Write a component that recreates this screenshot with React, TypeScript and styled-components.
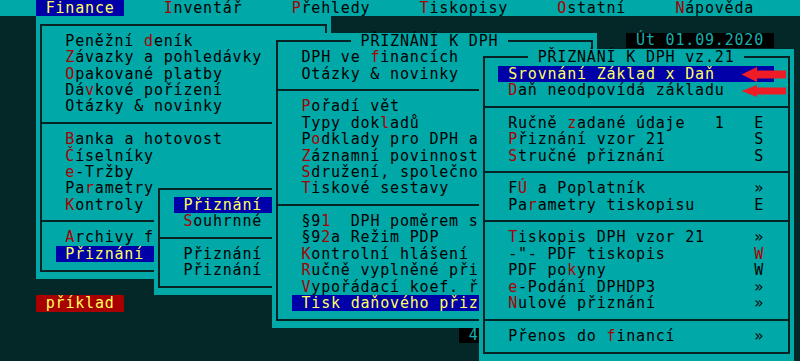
import React from 'react';
import styled, { createGlobalStyle } from 'styled-components';

// text-mode grid: one cell is CW x RH pixels
const CW = 9.84;
const RH = 16.4;
const X0 = -3.5;

const TEAL = '#00a8a8';
const DARK = '#042828';
const BLUE = '#0000a8';
const YELLOW = '#ffff5e';
const RED = '#a80000';
const INK = '#000000';
const LINE = '#062222';

const colX = (c: number) => X0 + c * CW;

const GlobalStyle = createGlobalStyle`
  html, body {
    margin: 0;
    padding: 0;
    background: ${DARK};
  }
  body {
    font-family: "DejaVu Sans Mono", "Liberation Mono", monospace;
    font-size: 15px;
    letter-spacing: 0.81px;
  }
`;

const Screen = styled.div`
  position: relative;
  width: 800px;
  height: 361px;
  overflow: hidden;
  background: ${DARK};
  color: ${INK};
  line-height: ${RH}px;
  white-space: pre;
`;

const MenuBar = styled.div`
  display: flex;
  gap: ${3 * CW}px;
  height: ${RH}px;
  padding-left: ${colX(4)}px;
  background: ${TEAL};
`;

const MenuItem = styled.div<{ $active?: boolean }>`
  padding: 0 ${CW}px;
  background: ${p => (p.$active ? BLUE : 'transparent')};
  color: ${p => (p.$active ? YELLOW : INK)};
`;

const Hot = styled.span`
  color: ${RED};
`;

// a window on the text desktop, placed by cell
const Win = styled.div<{ $c: number; $r: number; $w: number; $h: number; $z: number }>`
  position: absolute;
  left: ${p => colX(p.$c)}px;
  top: ${p => p.$r * RH}px;
  width: ${p => p.$w * CW}px;
  height: ${p => p.$h * RH}px;
  z-index: ${p => p.$z};
  box-sizing: border-box;
  padding: ${RH / 2 - 1}px ${CW / 2 - 1}px;
  background: ${TEAL};
`;

const Frame = styled.div`
  position: relative;
  height: 100%;
  box-sizing: border-box;
  border: 2px solid ${LINE};
  padding: ${RH / 2 - 1}px ${CW / 2 - 1}px;
`;

const Title = styled.div<{ $at: number }>`
  position: absolute;
  top: ${-(RH / 2 + 1)}px;
  left: ${p => p.$at * CW - CW / 2 - 1}px;
  height: ${RH}px;
  background: ${TEAL};
`;

const Item = styled.div<{ $sel?: boolean }>`
  display: flex;
  height: ${RH}px;
  margin: 0 ${CW}px;
  padding: 0 ${CW}px;
  background: ${p => (p.$sel ? BLUE : 'transparent')};
  color: ${p => (p.$sel ? YELLOW : INK)};
`;

const Label = styled.span`
  flex: 1;
  min-width: 0;
`;

const Hint = styled.span<{ $red?: boolean }>`
  color: ${p => (p.$red ? RED : 'inherit')};
`;

const Divider = styled.div`
  display: flex;
  align-items: center;
  height: ${RH}px;
  margin: 0 ${-(CW / 2 - 1)}px;

  &::before {
    content: '';
    flex: 1;
    height: 2px;
    background: ${LINE};
  }
`;

const Badge = styled.div<{ $c: number; $r: number; $w: number; $bg: string; $fg: string; $h?: number }>`
  position: absolute;
  left: ${p => colX(p.$c)}px;
  top: ${p => p.$r * RH}px;
  width: ${p => p.$w * CW}px;
  height: ${p => p.$h ?? RH}px;
  line-height: ${p => p.$h ?? RH}px;
  background: ${p => p.$bg};
  color: ${p => p.$fg};
`;

const Arrows = styled.svg`
  position: absolute;
  left: 738px;
  top: 62px;
  z-index: 10;
`;

type Entry = '-' | { t: string; hint?: string; hintRed?: boolean; sel?: boolean };

const Txt = ({ s, plain }: { s: string; plain?: boolean }) => {
  const i = s.indexOf('~');
  if (i < 0) return <>{s}</>;
  return (
    <>
      {s.slice(0, i)}
      {plain ? s[i + 1] : <Hot>{s[i + 1]}</Hot>}
      {s.slice(i + 2)}
    </>
  );
};

interface MenuProps {
  c: number;
  r: number;
  w: number;
  h: number;
  z: number;
  title?: string;
  titleAt?: number;
  items: Entry[];
}

const Menu = ({ c, r, w, h, z, title, titleAt = 0, items }: MenuProps) => (
  <Win $c={c} $r={r} $w={w} $h={h} $z={z}>
    <Frame>
      {title && <Title $at={titleAt}>{` ${title} `}</Title>}
      {items.map((it, i) =>
        it === '-' ? (
          <Divider key={i} />
        ) : (
          <Item key={i} $sel={it.sel}>
            <Label>
              <Txt s={it.t} plain={it.sel} />
            </Label>
            {it.hint && <Hint $red={it.hintRed}>{it.hint}</Hint>}
          </Item>
        )
      )}
    </Frame>
  </Win>
);

const finance: Entry[] = [
  { t: 'Peněžní ~deník' },
  { t: '~Závazky a pohledávky' },
  { t: '~Opakované platby' },
  { t: 'Dá~vkové pořízení' },
  { t: 'Otázky & novinky' },
  '-',
  { t: '~Banka a hotovost' },
  { t: '~Číselníky' },
  { t: '~e-Tržby' },
  { t: 'Pa~rametry' },
  { t: '~Kontroly' },
  '-',
  { t: '~Archivy f' },
  { t: 'Přiznání', sel: true },
];

const priznaniSub: Entry[] = [
  { t: 'Přiznání', sel: true },
  { t: '~Souhrnné' },
  '-',
  { t: 'Přiznání' },
  { t: 'Přiznání' },
];

const dph: Entry[] = [
  { t: 'DPH ve ~financích' },
  { t: 'Otázky & novinky' },
  '-',
  { t: '~Pořadí vět' },
  { t: 'Typy dok~ladů' },
  { t: 'P~odklady pro DPH a' },
  { t: '~Záznamní povinnost' },
  { t: '~Sdružení, společno' },
  { t: '~Tiskové sestavy' },
  '-',
  { t: '§9~1  DPH poměrem s' },
  { t: '§9~2a Režim PDP' },
  { t: '~Kontrolní hlášení' },
  { t: '~Ručně vyplněné při' },
  { t: '~Vypořádací koef. ř' },
  { t: 'Tisk daňového přiz', sel: true },
];

const vz21: Entry[] = [
  { t: 'Srovnání Základ x Daň', sel: true },
  { t: '~Daň neodpovídá základu' },
  '-',
  { t: 'Ručně ~zadané údaje', hint: '1   E' },
  { t: '~Přiznání vzor 21', hint: 'S' },
  { t: '~Stručné přiznání', hint: 'S' },
  '-',
  { t: 'F~Ú a Poplatník', hint: '»' },
  { t: 'Pa~rametry tiskopisu', hint: 'E' },
  '-',
  { t: '~Tiskopis DPH vzor 21', hint: '»' },
  { t: '-"- PDF tiskopis', hint: 'W', hintRed: true },
  { t: 'PDF po~kyny', hint: 'W' },
  { t: '~e-Podání DPHDP3', hint: '»' },
  { t: '~Nulové přiznání', hint: '»' },
  '-',
  { t: 'Přenos do ~financí', hint: '»' },
];

const topMenu = ['Finance', 'Inventář', 'Přehledy', 'Tiskopisy', 'Ostatní', 'Nápověda'];

export default function App() {
  return (
    <>
      <GlobalStyle />
      <Screen>
        <MenuBar>
          {topMenu.map((m, i) => (
            <MenuItem key={m} $active={i === 0}>
              {i === 0 ? m : <><Hot>{m[0]}</Hot>{m.slice(1)}</>}
            </MenuItem>
          ))}
        </MenuBar>

        <Menu c={4} r={1} w={30} h={16} z={1} items={finance} />
        <Menu c={16} r={11} w={16} h={7} z={2} items={priznaniSub} />
        <Menu c={28} r={2} w={33} h={18} z={3} title="PŘIZNÁNÍ K DPH" titleAt={8} items={dph} />
        <Menu c={49} r={3} w={32} h={19} z={4} title="PŘIZNÁNÍ K DPH vz.21" titleAt={5} items={vz21} />

        <Badge $c={64} $r={2} $w={15} $h={15} $bg="#000" $fg="#12b0b0">{' Út 01.09.2020'}</Badge>
        <Badge $c={4} $r={18} $w={9} $bg={RED} $fg={YELLOW}>{' příklad'}</Badge>
        <Badge $c={47} $r={20} $w={2} $h={15} $bg="#000" $fg="#12b0b0">{' 4'}</Badge>

        <Arrows width="52" height="40" viewBox="0 0 52 40">
          <polygon points="3.5,12.5 19,5 19,8.5 48,8.5 48,16.5 19,16.5 19,20" fill="#ee1d25" />
          <polygon points="3.5,29 19,23 19,25.5 48,25.5 48,32.5 19,32.5 19,35" fill="#ee1d25" />
        </Arrows>
      </Screen>
    </>
  );
}
